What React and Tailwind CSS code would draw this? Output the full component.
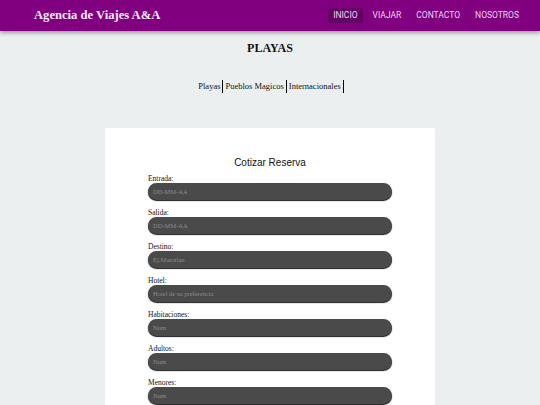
const NAV = ["INICIO", "VIAJAR", "CONTACTO", "NOSOTROS"];

const FIELDS = [
  { label: "Entrada:", placeholder: "DD-MM-AA" },
  { label: "Salida:", placeholder: "DD-MM-AA" },
  { label: "Destino:", placeholder: "Ej.Mazatlan" },
  { label: "Hotel:", placeholder: "Hotel de su preferencia" },
  { label: "Habitaciones:", placeholder: "Num" },
  { label: "Adultos:", placeholder: "Num" },
  { label: "Menores:", placeholder: "Num" },
];

const SERIF = "font-['Liberation_Serif',serif]";

function Header() {
  return (
    <header className="h-[31px] bg-[#800080] shadow-[0_2px_4px_rgba(0,0,0,0.35)] flex items-center justify-between pl-[34px] pr-[16px] relative z-10">
      <h1 className={`${SERIF} text-[#f6ecf6] font-bold text-[12.6px] leading-none`}>
        Agencia de Viajes A&amp;A
      </h1>
      <nav className="flex items-center gap-[5px] font-['Roboto',sans-serif] text-[8.5px]">
        {NAV.map((item, i) => (
          <a
            key={item}
            href="#"
            className={`px-[5px] h-[15px] flex items-center text-[#f0d6f0] ${i === 0 ? "bg-[#650065]" : ""}`}
          >
            {item}
          </a>
        ))}
      </nav>
    </header>
  );
}

function Field({ label, placeholder }) {
  return (
    <div className="mb-[8px]">
      <label className={`${SERIF} block text-[7.5px] leading-[9px] text-[#111]`}>{label}</label>
      <input
        placeholder={placeholder}
        className={`${SERIF} block w-full h-[17px] rounded-full bg-[#4a4a4a] shadow-[0_1px_1px_rgba(0,0,0,0.9)] px-[5px] text-[6.5px] text-white placeholder:text-[#8a8a8a] outline-none`}
      />
    </div>
  );
}

export default function App() {
  return (
    <div className="min-h-[405px] bg-[#ebeff0] overflow-hidden">
      <Header />
      <h2 className={`${SERIF} text-center font-bold text-[12px] leading-[12px] text-[#111] mt-[11px]`}>
        PLAYAS
      </h2>
      <div className={`${SERIF} flex justify-center items-center text-[8.5px] text-[#111] mt-[26px]`}>
        {["Playas", "Pueblos Magicos", "Internacionales"].map((l) => (
          <span key={l} className="border-r border-black px-[2px] leading-[13px]">
            {l}
          </span>
        ))}
      </div>
      <main className="mx-[105px] mt-[35px] bg-white rounded-[2px] pt-[28px] pb-[20px] px-[43px]">
        <h3 className="text-center font-['Liberation_Sans',sans-serif] text-[10px] leading-[14px] text-[#111] mb-[4px]">
          Cotizar Reserva
        </h3>
        {FIELDS.map((f) => (
          <Field key={f.label} {...f} />
        ))}
      </main>
    </div>
  );
}
